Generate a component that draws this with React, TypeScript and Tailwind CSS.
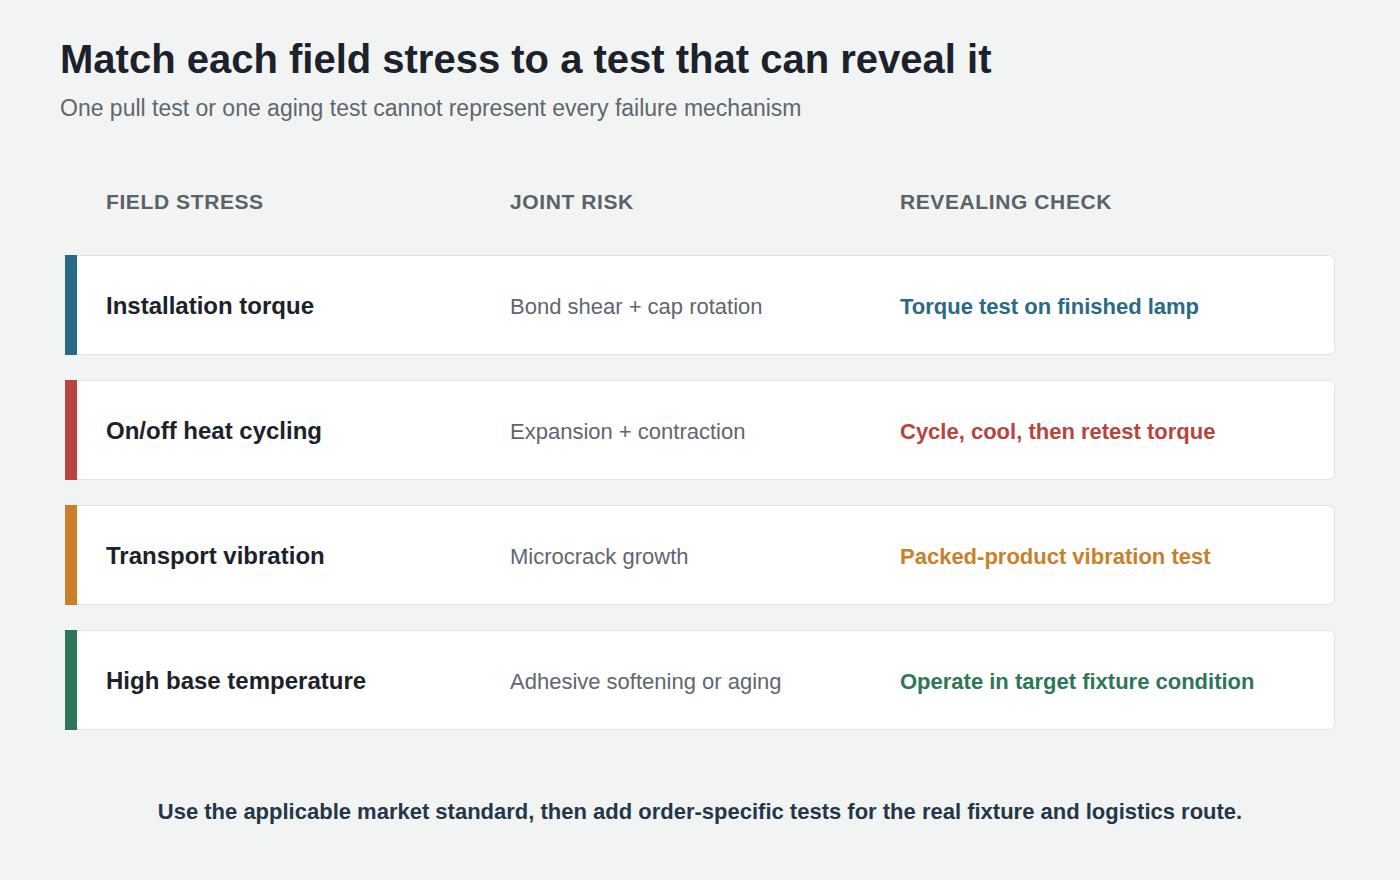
const rows = [
  {
    stress: 'Installation torque',
    risk: 'Bond shear + cap rotation',
    check: 'Torque test on finished lamp',
    bar: 'bg-[#2b6a85]',
    text: 'text-[#2b6a85]',
  },
  {
    stress: 'On/off heat cycling',
    risk: 'Expansion + contraction',
    check: 'Cycle, cool, then retest torque',
    bar: 'bg-[#b8443d]',
    text: 'text-[#b8443d]',
  },
  {
    stress: 'Transport vibration',
    risk: 'Microcrack growth',
    check: 'Packed-product vibration test',
    bar: 'bg-[#c98029]',
    text: 'text-[#c98029]',
  },
  {
    stress: 'High base temperature',
    risk: 'Adhesive softening or aging',
    check: 'Operate in target fixture condition',
    bar: 'bg-[#2e7658]',
    text: 'text-[#2e7658]',
  },
]

export default function App() {
  return (
    <div
      className="w-[1400px] h-[880px] bg-[#f2f4f3] px-[60px] pt-[36px]"
      style={{ fontFamily: '"Liberation Sans", Arial, sans-serif' }}
    >
      <h1 className="text-[40px] leading-[46px] font-bold text-[#1b222b]">
        Match each field stress to a test that can reveal it
      </h1>
      <p className="mt-[11px] text-[23px] leading-[30px] text-[#5f6670]">
        One pull test or one aging test cannot represent every failure mechanism
      </p>

      <div className="mx-[5px] mt-[54px]">
        <div className="grid grid-cols-[404px_390px_1fr] pl-[41px] h-[50px] items-center text-[21px] font-bold tracking-[0.6px] text-[#5b6169] uppercase">
          <div>Field stress</div>
          <div>Joint risk</div>
          <div>Revealing check</div>
        </div>

        <div className="mt-[28px] flex flex-col gap-[25px]">
          {rows.map((r) => (
            <div key={r.stress} className="flex h-[100px]">
              <div className={`w-[12px] shrink-0 ${r.bar}`} />
              <div className="grid flex-1 grid-cols-[404px_390px_1fr] items-center pl-[29px] pt-[2px] bg-white border border-l-0 border-[#e1e4e3] rounded-r-[6px] text-[22px]">
                <div className="font-bold text-[24px] text-[#1b222b]">{r.stress}</div>
                <div className="text-[#5f6670]">{r.risk}</div>
                <div className={`font-bold ${r.text}`}>{r.check}</div>
              </div>
            </div>
          ))}
        </div>
      </div>

      <p className="mt-[69px] text-center text-[22px] leading-[26px] font-bold text-[#24364a]">
        Use the applicable market standard, then add order-specific tests for the real fixture and logistics route.
      </p>
    </div>
  )
}
